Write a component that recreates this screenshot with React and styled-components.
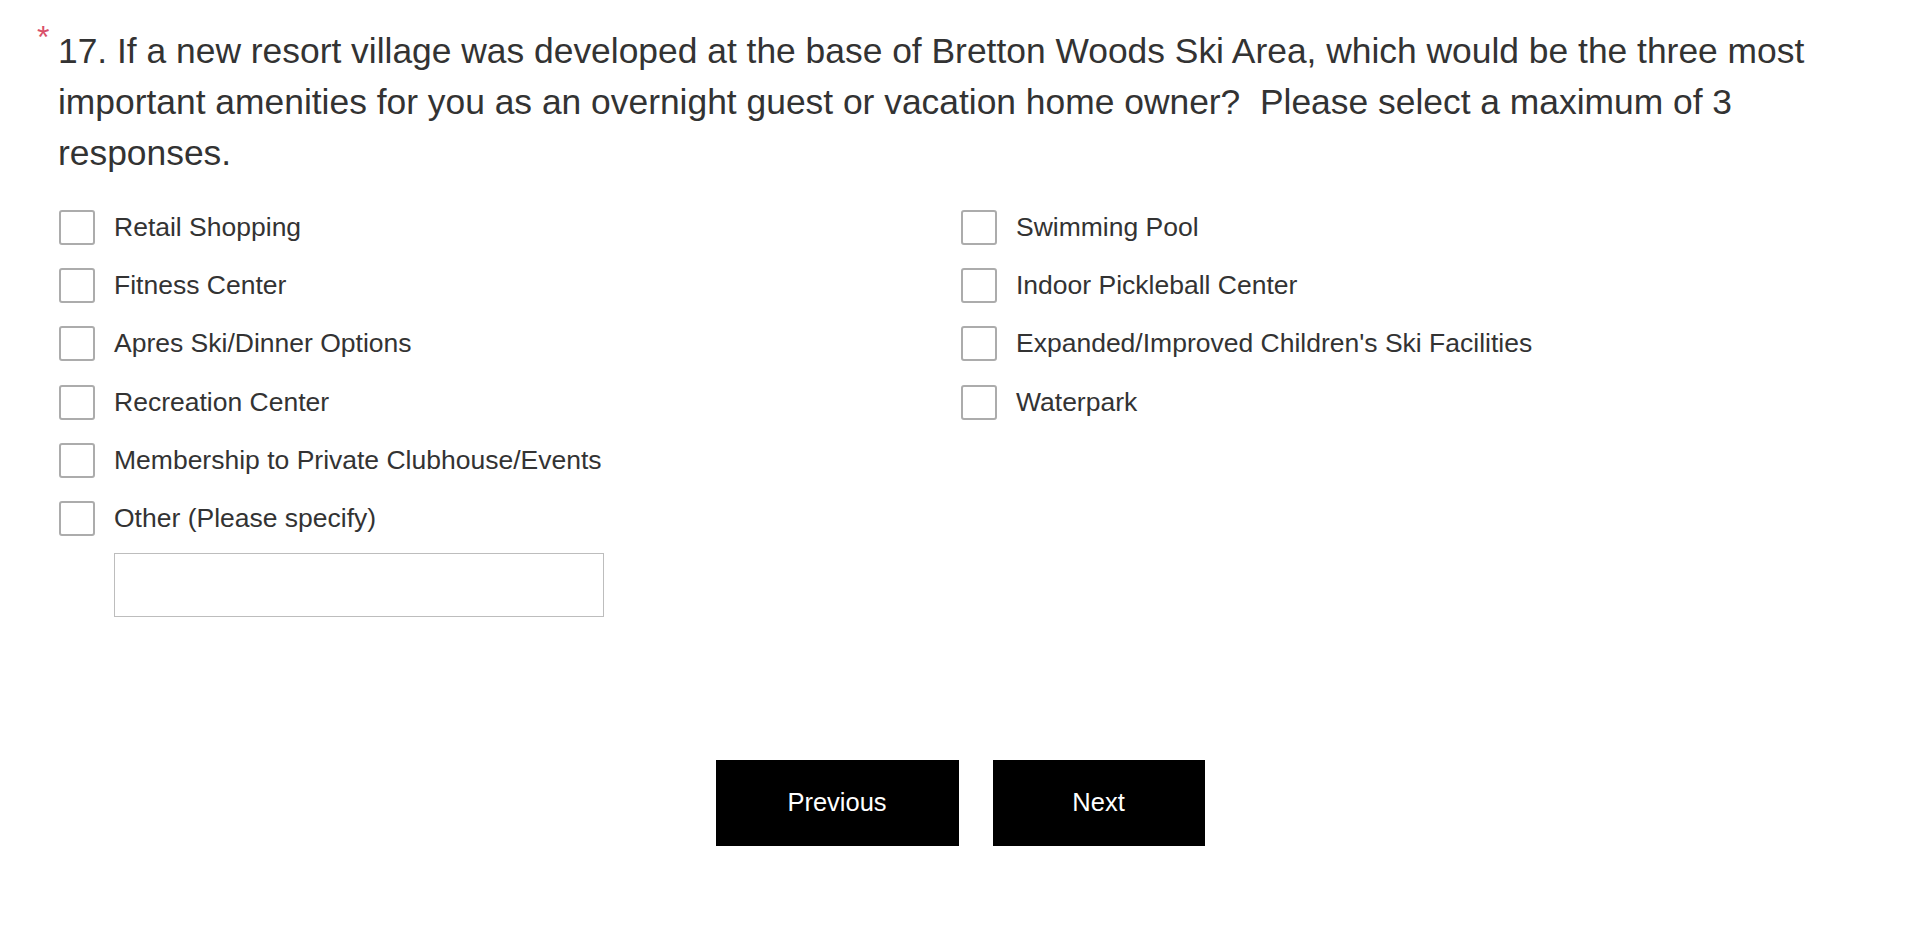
import styled, { createGlobalStyle } from "styled-components";
import { useState } from "react";

const GlobalStyle = createGlobalStyle`
  html, body {
    margin: 0;
    padding: 0;
    background: #ffffff;
  }
  body {
    font-family: "Liberation Sans", Arial, Helvetica, sans-serif;
    color: #333333;
  }
`;

const leftOptions = [
  "Retail Shopping",
  "Fitness Center",
  "Apres Ski/Dinner Options",
  "Recreation Center",
  "Membership to Private Clubhouse/Events",
  "Other (Please specify)",
];

const rightOptions = [
  "Swimming Pool",
  "Indoor Pickleball Center",
  "Expanded/Improved Children's Ski Facilities",
  "Waterpark",
];

export default function App() {
  const [checked, setChecked] = useState({});
  const [other, setOther] = useState("");

  const toggle = (name) =>
    setChecked((prev) => ({ ...prev, [name]: !prev[name] }));

  const renderOption = (name) => (
    <Option key={name}>
      <Box
        type="checkbox"
        checked={!!checked[name]}
        onChange={() => toggle(name)}
      />
      <Label>{name}</Label>
    </Option>
  );

  return (
    <Page>
      <GlobalStyle />
      <Question>
        <Required>*</Required>
        17. If a new resort village was developed at the base of Bretton Woods
        Ski Area, which would be the three most important amenities for you as
        an overnight guest or vacation home owner?&nbsp; Please select a
        maximum of 3 responses.
      </Question>
      <Columns>
        <Column>
          {leftOptions.map(renderOption)}
          <OtherInput
            type="text"
            value={other}
            onChange={(e) => setOther(e.target.value)}
          />
        </Column>
        <Column>{rightOptions.map(renderOption)}</Column>
      </Columns>
      <Nav>
        <NavButton $w={243}>Previous</NavButton>
        <NavButton $w={212}>Next</NavButton>
      </Nav>
    </Page>
  );
}

const Page = styled.div`
  width: 100%;
  min-height: 940px;
  box-sizing: border-box;
  padding: 26px 58px 0 58px;
`;

const Question = styled.div`
  position: relative;
  font-size: 35.4px;
  line-height: 51px;
  color: #333333;
`;

const Required = styled.span`
  position: absolute;
  left: -21px;
  top: -5px;
  font-size: 32px;
  line-height: 32px;
  color: #d9506a;
`;

const Columns = styled.div`
  display: grid;
  grid-template-columns: 1fr 1fr;
  margin-top: 19px;
`;

const Column = styled.div`
  display: flex;
  flex-direction: column;
`;

const Option = styled.label`
  display: flex;
  align-items: center;
  height: 58.3px;
  gap: 19px;
  cursor: pointer;
`;

const Box = styled.input`
  appearance: none;
  margin: 0 0 0 1px;
  width: 36px;
  height: 35px;
  box-sizing: border-box;
  border: 2px solid #acacac;
  border-radius: 3px;
  background: #ffffff;
  cursor: pointer;
  flex-shrink: 0;

  &:checked {
    background: #333333;
    border-color: #333333;
  }
`;

const Label = styled.span`
  font-size: 26.5px;
  color: #333333;
`;

const OtherInput = styled.input`
  margin: 5px 0 0 56px;
  width: 490px;
  height: 64px;
  box-sizing: border-box;
  border: 1.5px solid #bdbdbd;
  border-radius: 0;
  font-family: inherit;
  font-size: 24px;
  padding: 0 12px;
  outline: none;
`;

const Nav = styled.div`
  display: flex;
  justify-content: center;
  gap: 34px;
  margin-top: 143px;
`;

const NavButton = styled.button`
  width: ${(p) => p.$w}px;
  height: 86px;
  background: #000000;
  color: #ffffff;
  border: none;
  border-radius: 0;
  font-family: "Liberation Sans", Arial, sans-serif;
  font-size: 25.5px;
  cursor: pointer;
`;
